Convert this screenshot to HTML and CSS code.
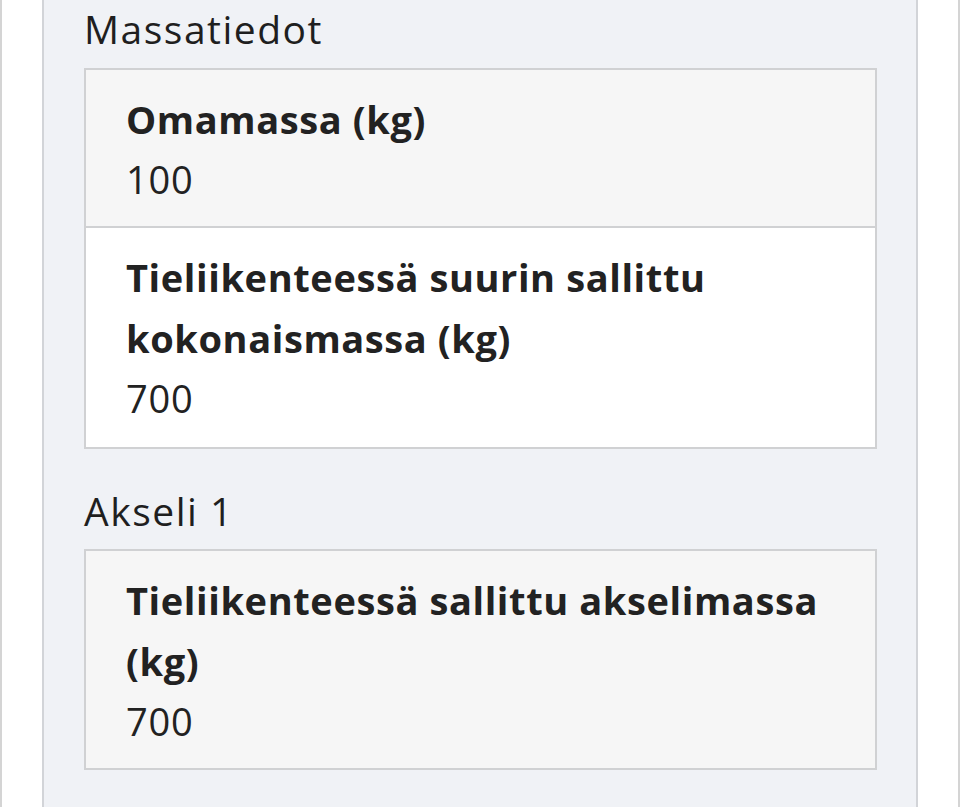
FILE: index.html
```html
<!DOCTYPE html>
<html lang="fi">
<head>
  <meta charset="UTF-8">
  <meta name="viewport" content="width=device-width, initial-scale=1.0">
  <title>Massatiedot</title>
  <link rel="stylesheet" href="styles.css">
</head>
<body>

  <div class="page">
    <section class="panel">

      <h3 class="group-title">Massatiedot</h3>
      <dl class="field-list">
        <div class="field">
          <dt>Omamassa (kg)</dt>
          <dd>100</dd>
        </div>
        <div class="field white">
          <dt>Tieliikenteessä suurin sallittu kokonaismassa (kg)</dt>
          <dd>700</dd>
        </div>
      </dl>

      <h3 class="group-title">Akseli 1</h3>
      <dl class="field-list">
        <div class="field">
          <dt>Tieliikenteessä sallittu akselimassa (kg)</dt>
          <dd>700</dd>
        </div>
      </dl>

    </section>
  </div>

</body>
</html>
```

FILE: styles.css
```css
html, body {
  margin: 0;
  padding: 0;
  background-color: #fff;
}

body {
  font-family: "Open Sans", "Noto Sans", sans-serif;
  color: #222;
}

.page {
  min-height: 807px;
  border-left: 2px solid #d4d4d4;
  border-right: 2px solid #d4d4d4;
  padding: 0 40px;
  display: flex;
}

.panel {
  flex: 1;
  background-color: #f0f2f6;
  border-left: 2px solid #d2d4d8;
  border-right: 2px solid #d2d4d8;
  padding: 6px 39px 0 40px;
}

.group-title {
  font-size: 39px;
  font-weight: 400;
  letter-spacing: 1.5px;
  line-height: 46px;
  margin: 0 0 16px;
  color: #1f1f1f;
}

.field-list + .group-title {
  margin-top: 39px;
  margin-bottom: 15px;
}

.field-list {
  margin: 0;
  border: 2px solid #d0d1d3;
}

.field {
  background-color: #f6f6f6;
  padding: 19px 40px 17px;
}

.field.white {
  background-color: #fff;
  padding-bottom: 19px;
}

.field + .field {
  border-top: 2px solid #d0d1d3;
}

.field dt {
  font-weight: 700;
  font-size: 38px;
  letter-spacing: 0.6px;
  line-height: 61px;
}

.field dd {
  margin: 0;
  font-size: 38px;
  letter-spacing: 0.8px;
  line-height: 59px;
}
```
